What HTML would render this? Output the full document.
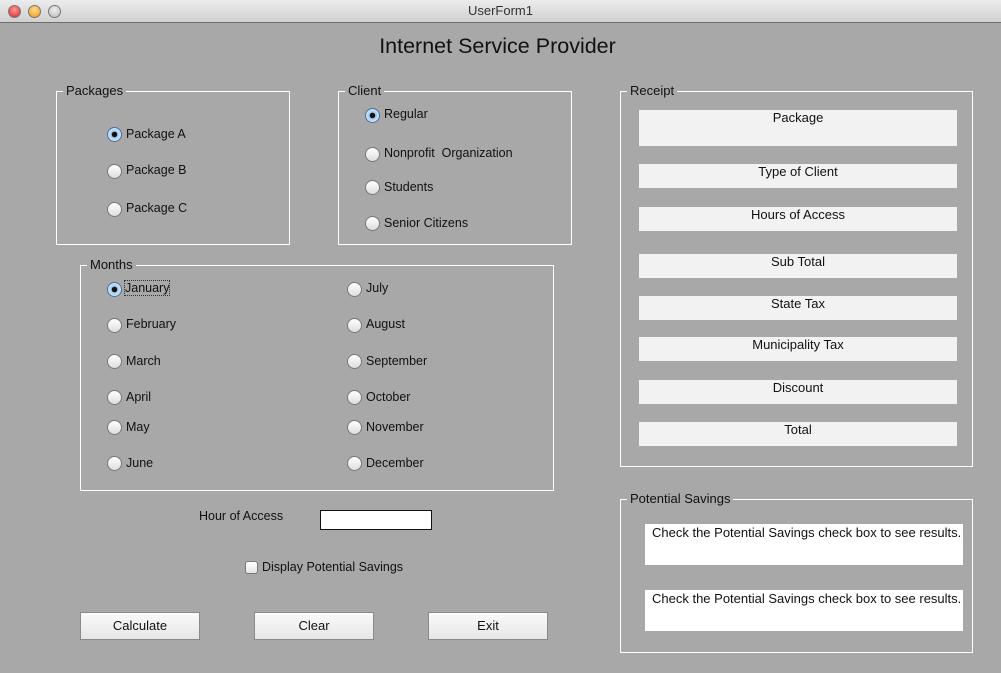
<!DOCTYPE html>
<html><head><meta charset="utf-8"><style>
*{margin:0;padding:0;box-sizing:border-box}
body{width:1001px;height:673px;background:#a8a8a8;font-family:"Liberation Sans","DejaVu Sans",sans-serif;font-size:12.5px;color:#111;position:relative;overflow:hidden}
.a{position:absolute;white-space:nowrap}
.tb{position:absolute;left:0;top:0;width:1001px;height:23px;background:linear-gradient(#ececec,#d0d0d0);border-bottom:1px solid #6e6e6e;text-align:center;font-size:13px;line-height:22px;color:#333}
.dot{position:absolute;top:5px;width:13px;height:13px;border-radius:50%;border:1px solid #777}
.fr{position:absolute;border:1px solid #fff}
.lg{position:absolute;top:-9px;left:6px;background:#a8a8a8;padding:0 3px;font-size:13px;line-height:15px}
.r{position:absolute;width:15px;height:15px;border-radius:50%;background:linear-gradient(#fff,#ddd);border:1px solid #777}
.r.on{background:radial-gradient(circle,#111 0 2.5px,#9cc8ef 3px,#d8ebfb 7px);border-color:#4a6f99}
.rb{position:absolute;left:639px;width:318px;background:#f2f2f2;text-align:center;font-size:13px;line-height:14px;padding-top:1px}
.wb{position:absolute;left:645px;width:318px;height:41px;background:#fff;font-size:13px;padding:1px 0 0 7px}
.btn{position:absolute;top:612px;width:120px;height:28px;background:linear-gradient(#fafafa,#e6e6e6);border:1px solid #8a8a8a;text-align:center;line-height:26px;font-size:13px}
</style></head><body>
<div class="tb">UserForm1</div>
<div class="dot" style="left:8px;background:radial-gradient(circle at 50% 35%,#f99,#d22)"></div>
<div class="dot" style="left:28px;background:radial-gradient(circle at 50% 35%,#fd9,#e90)"></div>
<div class="dot" style="left:48px;background:radial-gradient(circle at 50% 35%,#eee,#bbb)"></div>
<div class="a" style="left:0;width:995px;top:34px;text-align:center;font-size:21.5px">Internet Service Provider</div>

<div class="fr" style="left:56px;top:91px;width:234px;height:154px"><div class="lg">Packages</div></div>
<div class="r on" style="left:107px;top:127px"></div><div class="a" style="left:126px;top:127px">Package A</div>
<div class="r" style="left:107px;top:164px"></div><div class="a" style="left:126px;top:163px">Package B</div>
<div class="r" style="left:107px;top:202px"></div><div class="a" style="left:126px;top:201px">Package C</div>

<div class="fr" style="left:338px;top:91px;width:234px;height:154px"><div class="lg">Client</div></div>
<div class="r on" style="left:365px;top:108px"></div><div class="a" style="left:384px;top:107px">Regular</div>
<div class="r" style="left:365px;top:147px"></div><div class="a" style="left:384px;top:146px">Nonprofit &nbsp;Organization</div>
<div class="r" style="left:365px;top:180px"></div><div class="a" style="left:384px;top:180px">Students</div>
<div class="r" style="left:365px;top:216px"></div><div class="a" style="left:384px;top:216px">Senior Citizens</div>

<div class="fr" style="left:80px;top:265px;width:474px;height:226px"><div class="lg">Months</div></div>
<div class="r on" style="left:107px;top:282px"></div><div class="a" style="left:125px;top:281px;outline:1px dotted #333">January</div>
<div class="r" style="left:107px;top:318px"></div><div class="a" style="left:126px;top:317px">February</div>
<div class="r" style="left:107px;top:354px"></div><div class="a" style="left:126px;top:354px">March</div>
<div class="r" style="left:107px;top:390px"></div><div class="a" style="left:126px;top:390px">April</div>
<div class="r" style="left:107px;top:420px"></div><div class="a" style="left:126px;top:420px">May</div>
<div class="r" style="left:107px;top:456px"></div><div class="a" style="left:126px;top:456px">June</div>
<div class="r" style="left:347px;top:282px"></div><div class="a" style="left:366px;top:281px">July</div>
<div class="r" style="left:347px;top:318px"></div><div class="a" style="left:366px;top:317px">August</div>
<div class="r" style="left:347px;top:354px"></div><div class="a" style="left:366px;top:354px">September</div>
<div class="r" style="left:347px;top:390px"></div><div class="a" style="left:366px;top:390px">October</div>
<div class="r" style="left:347px;top:420px"></div><div class="a" style="left:366px;top:420px">November</div>
<div class="r" style="left:347px;top:456px"></div><div class="a" style="left:366px;top:456px">December</div>

<div class="a" style="left:199px;top:509px">Hour of Access</div>
<div class="a" style="left:320px;top:510px;width:112px;height:20px;background:#fff;border:1px solid #111"></div>
<div class="a" style="left:245px;top:561px;width:13px;height:13px;border:1px solid #777;border-radius:3px;background:linear-gradient(#fff,#e4e4e4)"></div>
<div class="a" style="left:262px;top:560px">Display Potential Savings</div>

<div class="btn" style="left:80px">Calculate</div>
<div class="btn" style="left:254px">Clear</div>
<div class="btn" style="left:428px">Exit</div>

<div class="fr" style="left:620px;top:91px;width:353px;height:376px"><div class="lg">Receipt</div></div>
<div class="rb" style="top:110px;height:36px">Package</div>
<div class="rb" style="top:164px;height:24px">Type of Client</div>
<div class="rb" style="top:207px;height:24px">Hours of Access</div>
<div class="rb" style="top:254px;height:24px">Sub Total</div>
<div class="rb" style="top:296px;height:24px">State Tax</div>
<div class="rb" style="top:337px;height:24px">Municipality Tax</div>
<div class="rb" style="top:380px;height:24px">Discount</div>
<div class="rb" style="top:422px;height:24px">Total</div>

<div class="fr" style="left:620px;top:499px;width:353px;height:154px"><div class="lg">Potential Savings</div></div>
<div class="wb" style="top:524px">Check the Potential Savings check box to see results.</div>
<div class="wb" style="top:590px">Check the Potential Savings check box to see results.</div>
</body></html>
